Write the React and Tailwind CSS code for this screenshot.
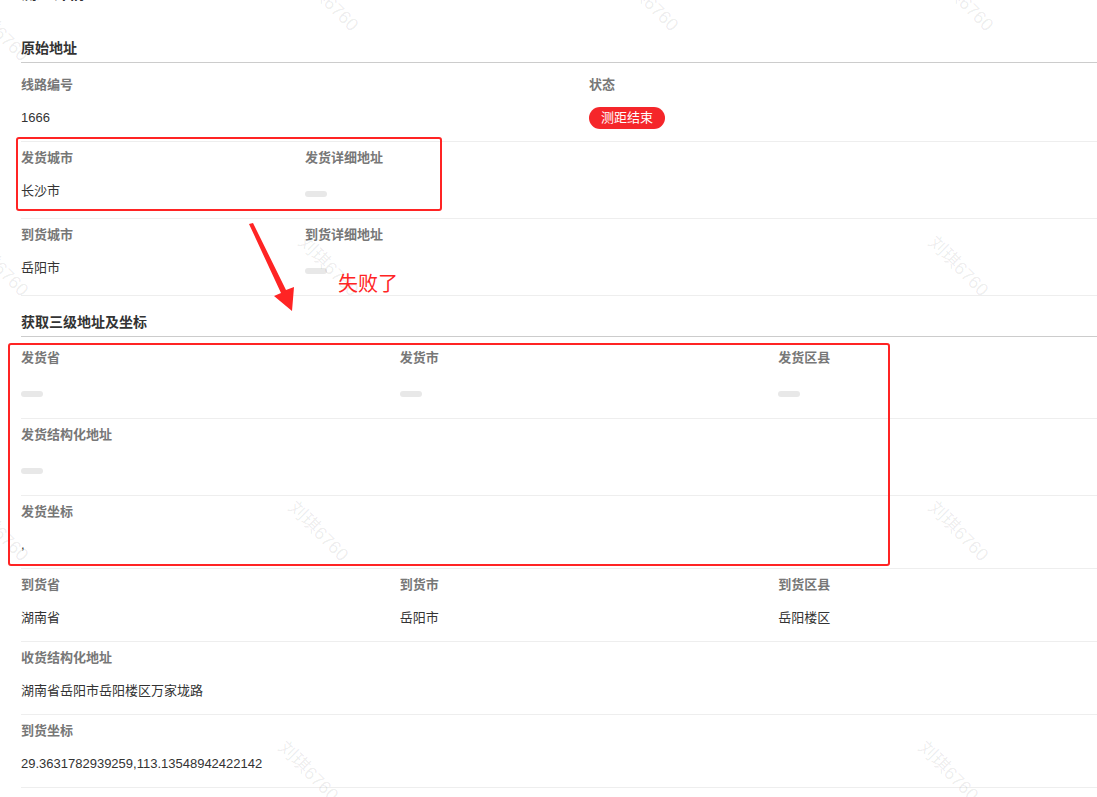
import React from 'react';

const FONT = { fontFamily: '"Liberation Sans", "Noto Sans CJK SC", sans-serif' };

const Bar = () => (
    <div className="pt-[25px] pb-[7px]">
        <div className="h-[6px] w-[22px] rounded-full bg-[#e8e8e8]" />
    </div>
);

const Value = ({ children }) => (
    <div className="pt-[16px] text-[13px] leading-[18px] text-[#333]">{children}</div>
);

const Field = ({ label, children, bar }) => (
    <div>
        <div className="text-[13px] leading-[16px] font-bold text-[#777]">{label}</div>
        {bar ? <Bar /> : <Value>{children}</Value>}
    </div>
);

const Row = ({ cols, children }) => (
    <div className={`grid ${cols} pt-[8px] pb-[14px] border-b border-[#eeeeee]`}>{children}</div>
);

const Header = ({ title }) => (
    <div className="pt-[16px] pb-[4px] mb-[5px] border-b border-[#cccccc] text-[14px] leading-[20px] font-bold text-[#333]">
        {title}
    </div>
);

const marks = [
    [330, 0], [650, 0], [965, 0], [0, 30],
    [0, 265], [330, 265], [960, 265],
    [0, 530], [320, 530], [960, 530],
    [310, 770], [950, 770],
];

const App = () => {
    return (
        <div className="relative h-[797px] w-[1097px] overflow-hidden bg-white" style={FONT}>
            <div className="w-[1136px] ml-[21px]">
                <div className="h-[5px] overflow-hidden">
                    <div className="-mt-[16px] text-[16px] leading-[20px] font-bold text-[#333]">测距详情</div>
                </div>
                <div className="h-[17px]" />

                <Header title="原始地址" />
                <div className="grid grid-cols-2 pt-[9px] pb-[12px] border-b border-[#eeeeee]">
                    <Field label="线路编号">1666</Field>
                    <div>
                        <div className="text-[13px] leading-[16px] font-bold text-[#777]">状态</div>
                        <div className="pt-[14px] flex">
                            <span className="h-[22px] px-[12px] rounded-full bg-[#f5262a] text-white text-[13px] leading-[22px]">测距结束</span>
                        </div>
                    </div>
                </div>
                <Row cols="grid-cols-4">
                    <Field label="发货城市">长沙市</Field>
                    <Field label="发货详细地址" bar />
                </Row>
                <Row cols="grid-cols-4">
                    <Field label="到货城市">岳阳市</Field>
                    <Field label="到货详细地址" bar />
                </Row>

                <Header title="获取三级地址及坐标" />
                <Row cols="grid-cols-3">
                    <Field label="发货省" bar />
                    <Field label="发货市" bar />
                    <Field label="发货区县" bar />
                </Row>
                <Row cols="grid-cols-1">
                    <Field label="发货结构化地址" bar />
                </Row>
                <Row cols="grid-cols-1">
                    <Field label="发货坐标">,</Field>
                </Row>
                <Row cols="grid-cols-3">
                    <Field label="到货省">湖南省</Field>
                    <Field label="到货市">岳阳市</Field>
                    <Field label="到货区县">岳阳楼区</Field>
                </Row>
                <Row cols="grid-cols-1">
                    <Field label="收货结构化地址">湖南省岳阳市岳阳楼区万家垅路</Field>
                </Row>
                <Row cols="grid-cols-1">
                    <Field label="到货坐标">29.3631782939259,113.13548942422142</Field>
                </Row>
            </div>

            {/* watermarks */}
            {marks.map(([x, y], i) => (
                <div
                    key={i}
                    className="absolute pointer-events-none text-[18px] text-black/[0.08] whitespace-nowrap rotate-45"
                    style={{ left: x - 40, top: y - 12 }}
                >
                    刘琪6760
                </div>
            ))}

            {/* annotations */}
            <div className="absolute left-[16px] top-[137px] w-[426px] h-[74px] border-2 border-[#ff2424] rounded-[3px]" />
            <div className="absolute left-[8px] top-[343px] w-[882px] h-[223px] border-2 border-[#ff2424] rounded-[3px]" />
            <svg className="absolute left-0 top-0" width="1097" height="797">
                <polygon points="249,224 253,223 286,290 294,287 292,311 274,296 281,293" fill="#ff2424" />
            </svg>
            <div className="absolute left-[338px] top-[270px] text-[20px] leading-[28px] text-[#ff2424]">失败了</div>
        </div>
    );
};

export default App;
